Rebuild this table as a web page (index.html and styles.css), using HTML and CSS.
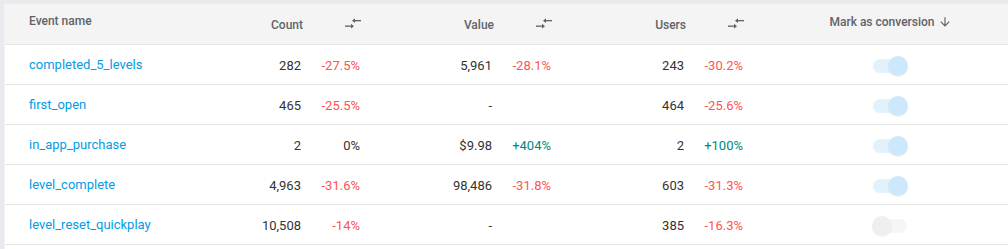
FILE: index.html
```html
<!DOCTYPE html>
<html>
<head>
<meta charset="utf-8">
<link rel="stylesheet" href="styles.css">
</head>
<body>
<div class="card">
  <div class="row head">
    <div class="cell name-h">Event name</div>
    <div class="cell num-h">Count</div>
    <div class="cell cmp-h"><svg class="cmp" viewBox="0 0 16 11"><rect x="9.5" y="2" width="6.5" height="1.3"/><polygon points="7,2.65 10,0.3 10,5"/><rect x="0" y="7.5" width="6.5" height="1.3"/><polygon points="9,8.15 6,5.8 6,10.5"/></svg></div>
    <div class="cell num-h">Value</div>
    <div class="cell cmp-h"><svg class="cmp" viewBox="0 0 16 11"><rect x="9.5" y="2" width="6.5" height="1.3"/><polygon points="7,2.65 10,0.3 10,5"/><rect x="0" y="7.5" width="6.5" height="1.3"/><polygon points="9,8.15 6,5.8 6,10.5"/></svg></div>
    <div class="cell num-h">Users</div>
    <div class="cell cmp-h"><svg class="cmp" viewBox="0 0 16 11"><rect x="9.5" y="2" width="6.5" height="1.3"/><polygon points="7,2.65 10,0.3 10,5"/><rect x="0" y="7.5" width="6.5" height="1.3"/><polygon points="9,8.15 6,5.8 6,10.5"/></svg></div>
    <div class="cell mark-h">Mark as conversion <svg class="sort" viewBox="0 0 24 24"><path d="M20 12l-1.41-1.41L13 16.17V4h-2v12.17l-5.58-5.59L4 12l8 8 8-8z"/></svg></div>
  </div>

  <div class="row">
    <div class="cell name">completed_5_levels</div>
    <div class="cell num">282</div>
    <div class="cell pct neg">-27.5%</div>
    <div class="cell num">5,961</div>
    <div class="cell pct neg">-28.1%</div>
    <div class="cell num">243</div>
    <div class="cell pct neg">-30.2%</div>
    <div class="cell mark"><span class="toggle on"><span class="thumb"></span></span></div>
  </div>

  <div class="row">
    <div class="cell name">first_open</div>
    <div class="cell num">465</div>
    <div class="cell pct neg">-25.5%</div>
    <div class="cell num">-</div>
    <div class="cell pct"></div>
    <div class="cell num">464</div>
    <div class="cell pct neg">-25.6%</div>
    <div class="cell mark"><span class="toggle on"><span class="thumb"></span></span></div>
  </div>

  <div class="row">
    <div class="cell name">in_app_purchase</div>
    <div class="cell num">2</div>
    <div class="cell pct">0%</div>
    <div class="cell num">$9.98</div>
    <div class="cell pct pos">+404%</div>
    <div class="cell num">2</div>
    <div class="cell pct pos">+100%</div>
    <div class="cell mark"><span class="toggle on"><span class="thumb"></span></span></div>
  </div>

  <div class="row">
    <div class="cell name">level_complete</div>
    <div class="cell num">4,963</div>
    <div class="cell pct neg">-31.6%</div>
    <div class="cell num">98,486</div>
    <div class="cell pct neg">-31.8%</div>
    <div class="cell num">603</div>
    <div class="cell pct neg">-31.3%</div>
    <div class="cell mark"><span class="toggle on"><span class="thumb"></span></span></div>
  </div>

  <div class="row">
    <div class="cell name">level_reset_quickplay</div>
    <div class="cell num">10,508</div>
    <div class="cell pct neg">-14%</div>
    <div class="cell num">-</div>
    <div class="cell pct"></div>
    <div class="cell num">385</div>
    <div class="cell pct neg">-16.3%</div>
    <div class="cell mark"><span class="toggle off"><span class="thumb"></span></span></div>
  </div>
  <div class="tail"></div>
</div>
</body>
</html>
```

FILE: styles.css
```css
html, body {
  margin: 0;
  padding: 0;
  background: #e8eaed;
  overflow: hidden;
}
body {
  padding: 4px 0 0 4px;
  font-family: Roboto, "Liberation Sans", Arial, sans-serif;
  font-size: 13px;
  color: #333;
}
.card {
  background: #fff;
  border-top: 1px solid #f1f3f4;
  border-left: 1px solid #f1f3f4;
}
.row {
  display: grid;
  grid-template-columns: 195px 103px 59px 132px 59px 133px 59px 1fr;
  height: 40px;
  box-sizing: border-box;
  border-bottom: 1px solid #e6e6e6;
  align-items: center;
}
.head {
  background: #f4f4f4;
  color: #5f6368;
  font-size: 12px;
  font-weight: 500;
}
.cell {
  white-space: nowrap;
}
.name-h {
  padding-left: 24px;
  padding-bottom: 7px;
}
.num-h {
  text-align: right;
  padding-top: 1px;
}
.cmp-h {
  display: flex;
  justify-content: flex-end;
  padding-right: 1px;
  padding-bottom: 3px;
}
.cmp {
  width: 16px;
  height: 11px;
  fill: #5f6368;
}
.mark-h {
  display: flex;
  align-items: center;
  justify-content: center;
  padding-left: 28px;
  padding-bottom: 6px;
}
.sort {
  width: 14px;
  height: 14px;
  margin-left: 3px;
  fill: #5f6368;
}
.name {
  padding-left: 24px;
  color: #039be5;
}
.num, .pct {
  text-align: right;
  padding-right: 2px;
  padding-top: 1px;
}
.neg { color: #ff5252; }
.pos { color: #00897b; }
.mark {
  display: flex;
  justify-content: center;
  padding-left: 26px;
  padding-top: 2px;
}
.toggle {
  position: relative;
  display: block;
  width: 34px;
  height: 14px;
  border-radius: 7px;
}
.toggle .thumb {
  position: absolute;
  top: -3px;
  width: 20px;
  height: 20px;
  border-radius: 50%;
}
.toggle.on { background: #e1f2fc; }
.toggle.on .thumb {
  right: -1px;
  background: #cde8fa;
  box-shadow: 0 1px 1px rgba(0,0,0,0.06);
}
.toggle.off { background: #f6f6f6; }
.toggle.off .thumb {
  left: -1px;
  background: #efefef;
  box-shadow: 0 1px 1px rgba(0,0,0,0.05);
}
.tail {
  height: 10px;
}
```
